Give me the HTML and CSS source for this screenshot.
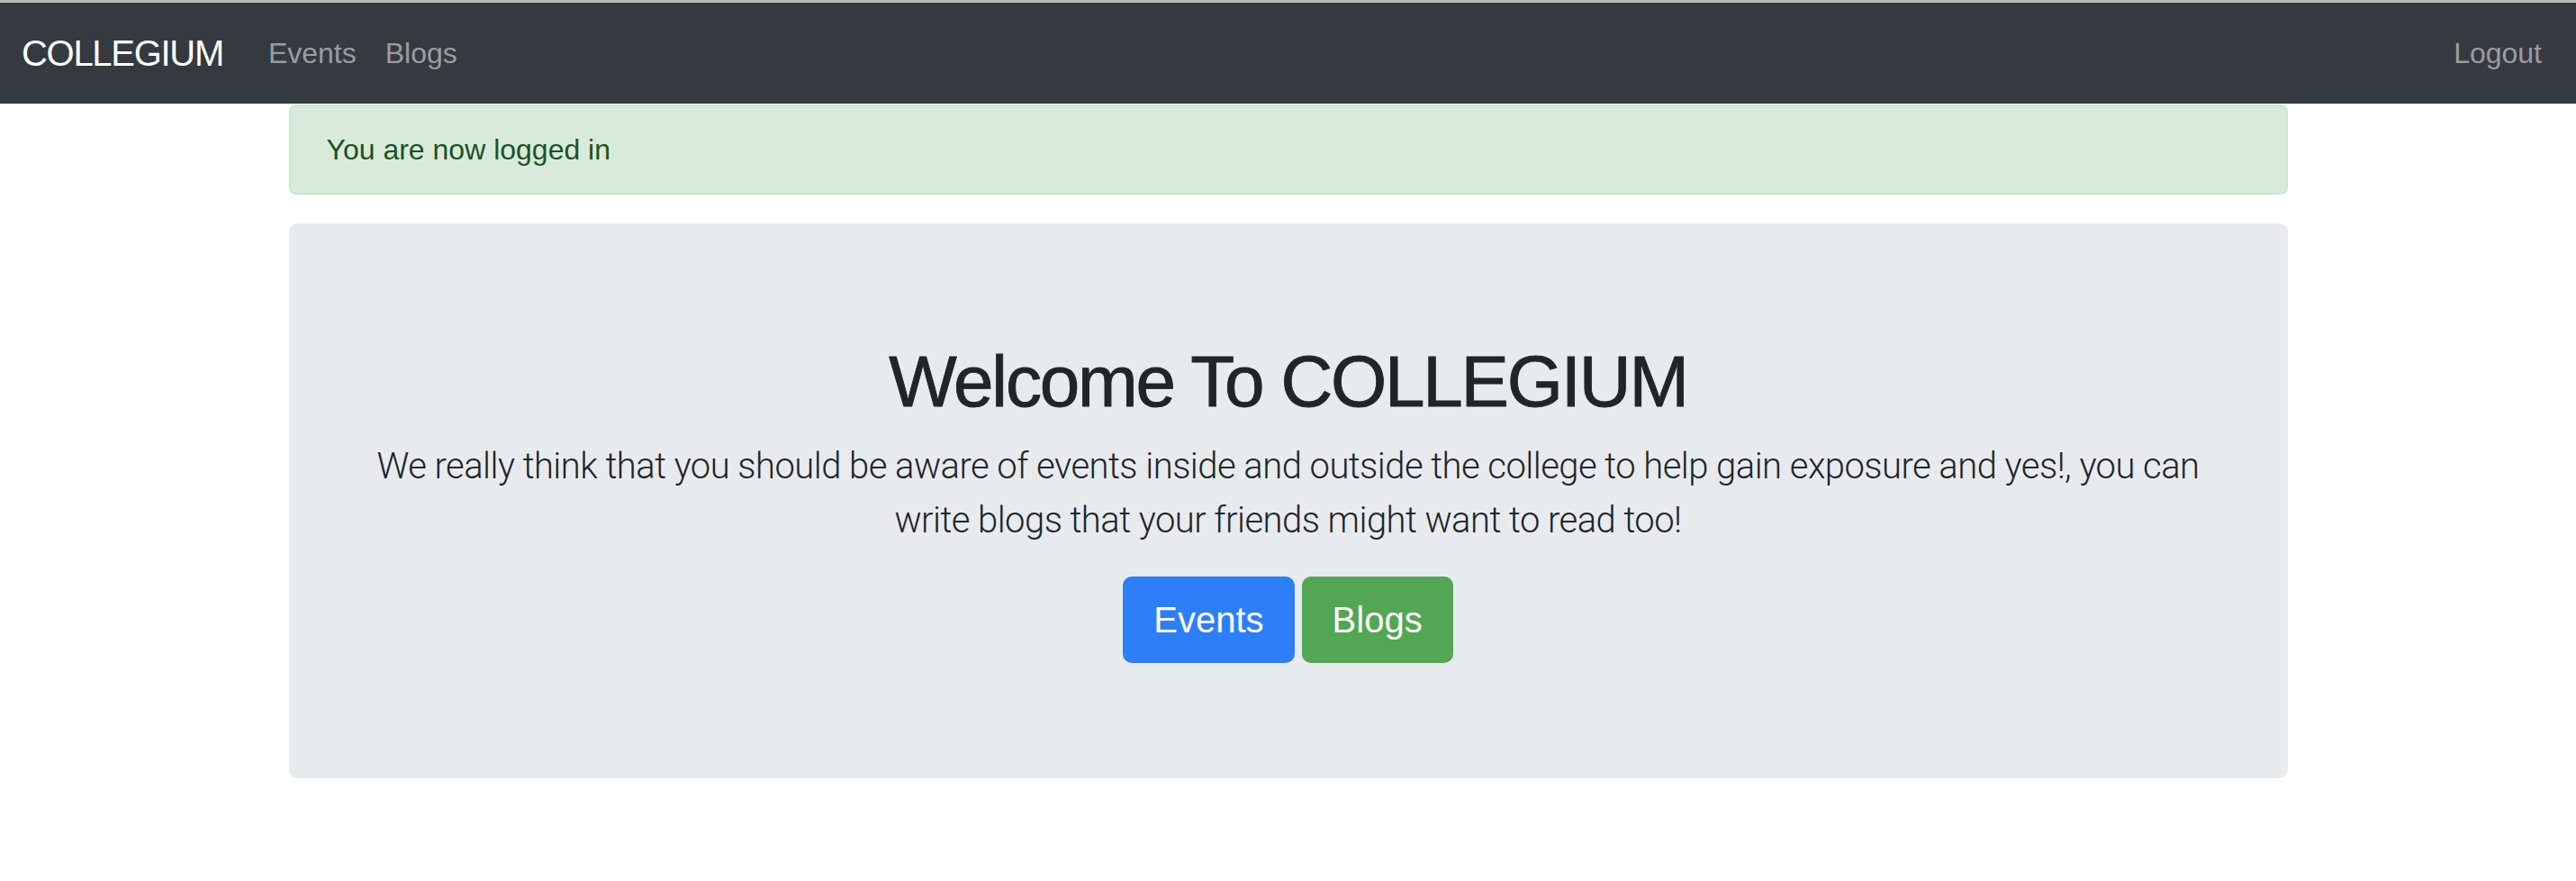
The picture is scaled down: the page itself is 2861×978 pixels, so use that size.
FILE: index.html
```html
<!DOCTYPE html>
<html lang="en">
<head>
<meta charset="utf-8">
<title>COLLEGIUM</title>
<link rel="stylesheet" href="styles.css">
</head>
<body>
<div class="topline"></div>
<nav class="navbar">
  <a class="brand" href="#">COLLEGIUM</a>
  <ul class="nav">
    <li><a class="nav-link" href="#">Events</a></li>
    <li><a class="nav-link" href="#">Blogs</a></li>
  </ul>
  <ul class="nav nav-right">
    <li><a class="nav-link" href="#">Logout</a></li>
  </ul>
</nav>
<main class="container">
  <div class="alert">You are now logged in</div>
  <section class="jumbotron">
    <h1 class="title">Welcome To COLLEGIUM</h1>
    <p class="lead">We really think that you should be aware of events inside and outside the college to help gain exposure and yes!, you can write blogs that your friends might want to read too!</p>
    <div class="actions">
      <a class="btn btn-primary" href="#">Events</a>
      <a class="btn btn-success" href="#">Blogs</a>
    </div>
  </section>
</main>
</body>
</html>
```
FILE: styles.css
```css
* { box-sizing: border-box; }
html, body {
  margin: 0;
  padding: 0;
  background: #ffffff;
}
body {
  font-family: "Liberation Sans", Arial, sans-serif;
  font-size: 32px;
  line-height: 1.5;
  color: #212529;
}
a { text-decoration: none; }

.topline {
  height: 3px;
  background: #b8b8b8;
}

.navbar {
  height: 112px;
  display: flex;
  align-items: center;
  padding: 0 22px 0 24px;
  background: #343a40;
}
.brand {
  font-size: 40px;
  line-height: 60px;
  color: #ffffff;
  letter-spacing: -1.3px;
  margin-right: 34px;
}
.nav {
  display: flex;
  list-style: none;
  margin: 0;
  padding: 0;
}
.nav-right { margin-left: auto; }
.nav-link {
  display: block;
  padding: 0 16px;
  font-size: 32px;
  line-height: 48px;
  color: #9a9da0;
}

.container {
  width: 2220px;
  margin: 1px auto 0;
}

.alert {
  padding: 24px 40px;
  border: 2px solid #c9e5cd;
  border-radius: 8px;
  background: #d8ebdb;
  color: #1d5225;
  line-height: 48px;
  margin-bottom: 32px;
}

.jumbotron {
  padding: 128px 64px;
  background: #e8ebee;
  border-radius: 10px;
  text-align: center;
}
.title {
  margin: 0 0 16px;
  font-size: 80px;
  line-height: 96px;
  font-weight: 400;
  letter-spacing: -2.2px;
  -webkit-text-stroke: 0.9px #212529;
  color: #212529;
}
.lead {
  margin: 0 0 32px;
  font-family: Roboto, "Liberation Sans", Arial, sans-serif;
  font-size: 40px;
  line-height: 60px;
  font-weight: 300;
  letter-spacing: -0.55px;
}
.actions {
  display: flex;
  justify-content: center;
  gap: 8px;
}
.btn {
  display: block;
  padding: 16px 32px;
  border: 2px solid transparent;
  border-radius: 10px;
  font-size: 40px;
  line-height: 60px;
  color: #ffffff;
}
.btn-primary {
  background: #2d7ff8;
  border-color: #2d7ff8;
}
.btn-success {
  background: #53a653;
  border-color: #53a653;
}
```
